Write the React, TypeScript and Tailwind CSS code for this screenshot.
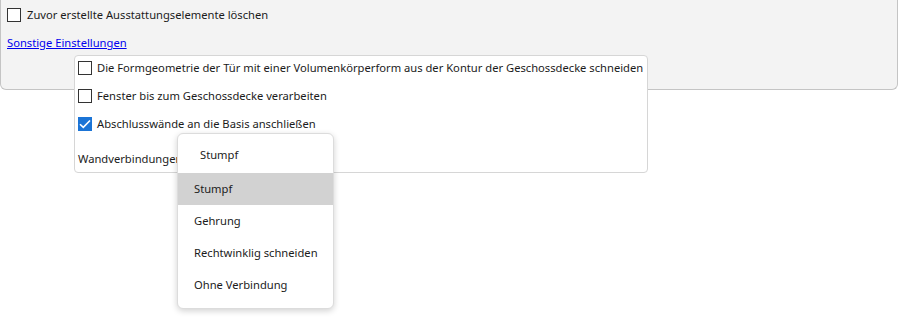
import React from 'react';

function Box({ checked }: { checked?: boolean }) {
  if (checked) {
    return (
      <span className="w-[14px] h-[14px] shrink-0 bg-[#1b74d6] flex items-center justify-center">
        <svg width="12" height="10" viewBox="0 0 12 10">
          <path d="M1 5.2 L4.3 8.4 L11 1.5" fill="none" stroke="#fff" strokeWidth="1.6" />
        </svg>
      </span>
    );
  }
  return <span className="w-[14px] h-[14px] shrink-0 border border-[#333] bg-white" />;
}

const options = ['Stumpf', 'Gehrung', 'Rechtwinklig schneiden', 'Ohne Verbindung'];

export default function App() {
  return (
    <div className="relative w-[900px] h-[320px] bg-white text-[11.2px] leading-[16px] whitespace-nowrap text-[#1b1b1b] font-['Noto_Sans',sans-serif]">
      <div className="w-[898px] h-[90px] bg-[#f3f3f3] border border-t-0 border-[#c4c4c4] rounded-b-[6px] pl-[6px] pt-[8px]">
        <div className="flex items-center gap-[6px] h-[14px]">
          <Box />
          <span>Zuvor erstellte Ausstattungselemente löschen</span>
        </div>
        <a className="block mt-[13px] text-[#0000ee] underline">Sonstige Einstellungen</a>
      </div>

      <div className="absolute left-[74px] top-[55px] w-[574px] h-[118px] bg-white border border-[#d6d6d6] rounded-[4px] pl-[3px] pt-[5px]">
        <div className="flex flex-col gap-[14px]">
          <div className="flex items-center gap-[5px] h-[14px]">
            <Box />
            <span>Die Formgeometrie der Tür mit einer Volumenkörperform aus der Kontur der Geschossdecke schneiden</span>
          </div>
          <div className="flex items-center gap-[5px] h-[14px]">
            <Box />
            <span>Fenster bis zum Geschossdecke verarbeiten</span>
          </div>
          <div className="flex items-center gap-[5px] h-[14px]">
            <Box checked />
            <span>Abschlusswände an die Basis anschließen</span>
          </div>
        </div>
        <div className="mt-[20px]">Wandverbindungen</div>
      </div>

      <div className="absolute left-[177px] top-[133px] w-[157px] h-[176px] bg-white border border-[#dcdcdc] rounded-[6px] shadow-[0_2px_6px_rgba(0,0,0,0.18)] overflow-hidden">
        <div className="h-[39px] flex items-center pl-[22px] pt-[3px]">Stumpf</div>
        {options.map((o, i) => (
          <div key={o} className={`h-[32px] flex items-center pl-[16px] ${i === 0 ? 'bg-[#d2d2d2]' : ''}`}>
            {o}
          </div>
        ))}
      </div>
    </div>
  );
}
